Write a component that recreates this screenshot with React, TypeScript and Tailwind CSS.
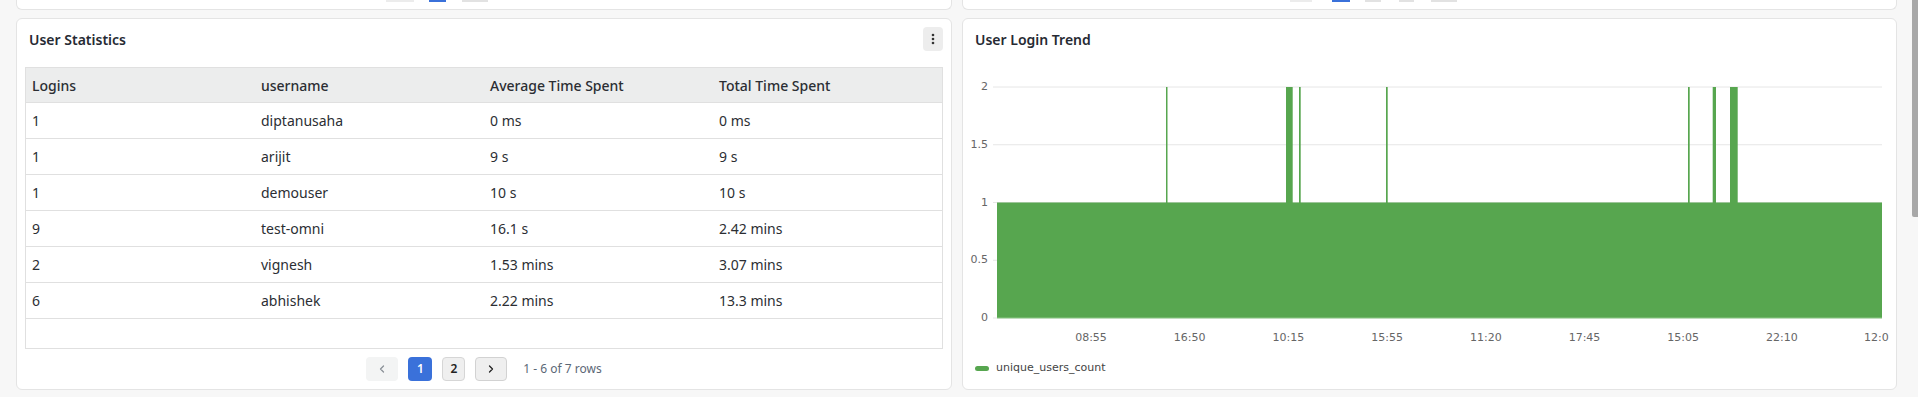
import { FC } from 'react';
import { ChevronLeft, ChevronRight } from 'lucide-react';

type Row = {
  logins: string;
  username: string;
  avg: string;
  total: string;
};

const rows: Row[] = [
  { logins: '1', username: 'diptanusaha', avg: '0 ms', total: '0 ms' },
  { logins: '1', username: 'arijit', avg: '9 s', total: '9 s' },
  { logins: '1', username: 'demouser', avg: '10 s', total: '10 s' },
  { logins: '9', username: 'test-omni', avg: '16.1 s', total: '2.42 mins' },
  { logins: '2', username: 'vignesh', avg: '1.53 mins', total: '3.07 mins' },
  { logins: '6', username: 'abhishek', avg: '2.22 mins', total: '13.3 mins' },
];

// chart geometry, in svg px
const gridY = [20, 77.75, 135.5, 193.25, 251];
const yLabels = ['2', '1.5', '1', '0.5', '0'];
const xLabels = ['08:55', '16:50', '10:15', '15:55', '11:20', '17:45', '15:05', '22:10'];
const spikes: [number, number][] = [
  [203, 1.5],
  [323, 6.7],
  [336, 1.7],
  [423, 1.7],
  [725, 1.7],
  [749.7, 3.3],
  [767, 7.7],
];

const UserStatistics: FC = () => {
  return (
    <div className="w-[936px] h-[372px] bg-white border border-[#e4e4e4] rounded-[6px] px-[8px] flex flex-col">
      <div className="mt-[8px] h-[24px] flex items-center justify-between">
        <span className="pl-[4px] text-[14px] font-semibold text-[#262a33]">User Statistics</span>
        <button className="w-[20px] h-[24px] bg-[#ededed] rounded-[4px] flex items-center justify-center">
          <svg width="4" height="14" viewBox="0 0 4 14">
            <circle cx="2" cy="3" r="1.3" fill="#333" />
            <circle cx="2" cy="7" r="1.3" fill="#333" />
            <circle cx="2" cy="11" r="1.3" fill="#333" />
          </svg>
        </button>
      </div>
      <div className="mt-[16px] border border-[#e0e0e0] text-[14px] text-[#2b2e33]">
        <div className="grid grid-cols-4 h-[34px] items-center bg-[#eceded] font-medium">
          <span className="px-[6px]">Logins</span>
          <span className="px-[6px]">username</span>
          <span className="px-[6px]">Average Time Spent</span>
          <span className="px-[6px]">Total Time Spent</span>
        </div>
        {rows.map((row, i) => (
          <div key={i} className="grid grid-cols-4 h-[36px] items-center border-t border-[#e0e0e0]">
            <span className="px-[6px]">{row.logins}</span>
            <span className="px-[6px]">{row.username}</span>
            <span className="px-[6px]">{row.avg}</span>
            <span className="px-[6px]">{row.total}</span>
          </div>
        ))}
        <div className="h-[30px] border-t border-[#e0e0e0]" />
      </div>
      <div className="mt-[8px] h-[24px] flex items-center justify-center gap-[10px] text-[12px]">
        <button className="w-[32px] h-[24px] rounded-[4px] bg-[#f3f4f4] flex items-center justify-center text-[#8a8f96]">
          <ChevronLeft size={12} strokeWidth={2.5} />
        </button>
        <button className="w-[24px] h-[24px] rounded-[4px] bg-[#3a71da] text-white font-semibold">1</button>
        <button className="w-[23px] h-[24px] rounded-[4px] bg-[#efefef] border border-[#d6d6d6] text-[#222] font-semibold">
          2
        </button>
        <button className="w-[32px] h-[24px] rounded-[4px] bg-[#efefef] border border-[#d2d2d2] flex items-center justify-center text-[#222]">
          <ChevronRight size={12} strokeWidth={2.5} />
        </button>
        <span className="ml-[6px] text-[#5c6876]">1 - 6 of 7 rows</span>
      </div>
    </div>
  );
};

const LoginTrend: FC = () => {
  return (
    <div className="w-[935px] h-[372px] bg-white border border-[#e4e4e4] rounded-[6px] flex flex-col">
      <div className="mt-[8px] h-[24px] flex items-center pl-[12px]">
        <span className="text-[14px] font-semibold text-[#262a33]">User Login Trend</span>
      </div>
      <svg width="930" height="283" className="mt-[16px]" style={{ fontFamily: '"DejaVu Sans", sans-serif' }}>
        {gridY.map((y, i) => (
          <g key={i}>
            <line x1="30" x2="919" y1={y} y2={y} stroke="#e6e6e6" strokeWidth="1" />
            <text x="25" y={y} textAnchor="end" dominantBaseline="middle" fontSize="11" fill="#666">
              {yLabels[i]}
            </text>
          </g>
        ))}
        <rect x="34" y="135.5" width="885" height="115.5" fill="#57a64f" />
        <line x1="34" x2="919" y1="251" y2="251" stroke="#8cc886" strokeWidth="1" />
        {spikes.map(([x, w], i) => (
          <rect key={i} x={x} y="20" width={w} height="116" fill="#57a64f" />
        ))}
        {xLabels.map((t, i) => (
          <text
            key={t + i}
            x={128 + i * 98.7}
            y="271"
            textAnchor="middle"
            dominantBaseline="middle"
            fontSize="11"
            fill="#666"
          >
            {t}
          </text>
        ))}
        <text x="901" y="271" dominantBaseline="middle" fontSize="11" fill="#666">
          12:0
        </text>
      </svg>
      <div className="mt-[10px] h-[16px] pl-[12px] flex items-center gap-[7px]">
        <span className="w-[14px] h-[5px] rounded-full bg-[#57a64f]" />
        <span className="text-[11px] text-[#444]" style={{ fontFamily: '"DejaVu Sans", sans-serif' }}>
          unique_users_count
        </span>
      </div>
    </div>
  );
};

const App: FC = () => {
  return (
    <div
      className="relative w-[1918px] h-[397px] overflow-hidden bg-[#f7f7f7]"
      style={{ fontFamily: '"Noto Sans", "Open Sans", sans-serif' }}
    >
      <div className="flex flex-col gap-[8px] pl-[16px]">
        <div className="flex gap-[10px] h-[10px]">
          <div className="w-[936px] h-full bg-white border border-t-0 border-[#e4e4e4] rounded-b-[6px] flex items-start">
            <span className="ml-[369px] w-[28px] h-[2px] bg-[#ececec]" />
            <span className="ml-[15px] w-[17px] h-[2px] bg-[#3a71da]" />
            <span className="ml-[16px] w-[26px] h-[2px] bg-[#e2e2e2]" />
          </div>
          <div className="w-[935px] h-full bg-white border border-t-0 border-[#e4e4e4] rounded-b-[6px] flex items-start">
            <span className="ml-[327px] w-[22px] h-[2px] bg-[#ececec]" />
            <span className="ml-[20px] w-[18px] h-[2px] bg-[#3a71da]" />
            <span className="ml-[15px] w-[16px] h-[2px] bg-[#e2e2e2]" />
            <span className="ml-[18px] w-[15px] h-[2px] bg-[#e2e2e2]" />
            <span className="ml-[17px] w-[26px] h-[2px] bg-[#e2e2e2]" />
          </div>
        </div>
        <div className="flex gap-[10px]">
          <UserStatistics />
          <LoginTrend />
        </div>
      </div>
      <div className="absolute right-0 top-0 w-[6px] h-[217px] bg-[#a8a8a8] rounded-bl-[2px]" />
    </div>
  );
};

export default App;
